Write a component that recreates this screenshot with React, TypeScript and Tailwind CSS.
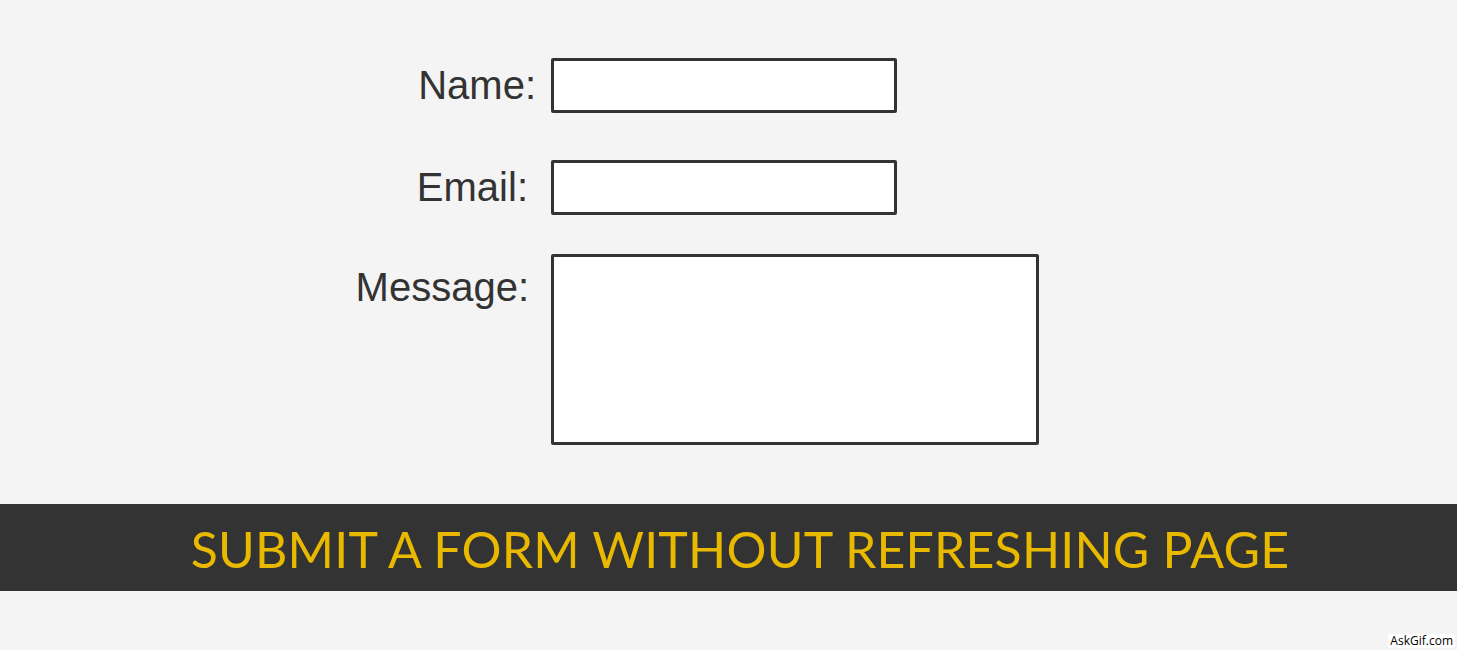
import React from 'react';

const labelCls =
  "text-[40px] leading-none text-[#333] font-['Liberation_Sans',Arial,sans-serif] text-right";

const boxCls = "ml-[15px] bg-white border-[3px] border-[#333] rounded-[2px] outline-none";

const App: React.FC = () => {
  return (
    <div className="relative w-full h-[650px] bg-[#f4f4f4] flex flex-col overflow-hidden">
      {/* Form */}
      <form className="flex flex-col pt-[58px]" onSubmit={(e) => e.preventDefault()}>
        <div className="flex items-center">
          <label className={`${labelCls} w-[536px] pb-[2px]`}>Name:</label>
          <input type="text" className={`${boxCls} w-[346px] h-[55px]`} />
        </div>

        <div className="flex items-center mt-[47px]">
          <label className={`${labelCls} w-[536px] pr-[8px] pb-[2px]`}>Email:</label>
          <input type="email" className={`${boxCls} w-[346px] h-[55px]`} />
        </div>

        <div className="flex items-start mt-[39px]">
          <label className={`${labelCls} w-[536px] pr-[7px] pt-[13px]`}>Message:</label>
          <textarea className={`${boxCls} w-[488px] h-[191px] resize-none`} />
        </div>
      </form>

      {/* Title banner */}
      <div className="mt-[59px] h-[87px] bg-[#333333] flex items-center justify-center pl-[23px]">
        <h1 className="text-[#e9b900] text-[50px] leading-none font-['Lato',sans-serif] uppercase tracking-[0.2px] pt-[2px]">
          Submit a form without refreshing page
        </h1>
      </div>

      {/* Watermark */}
      <span className="absolute right-[2px] bottom-[2px] bg-white px-[2px] text-[12px] leading-[14px] text-black font-['Open_Sans',sans-serif]">
        AskGif.com
      </span>
    </div>
  );
};

export default App;
